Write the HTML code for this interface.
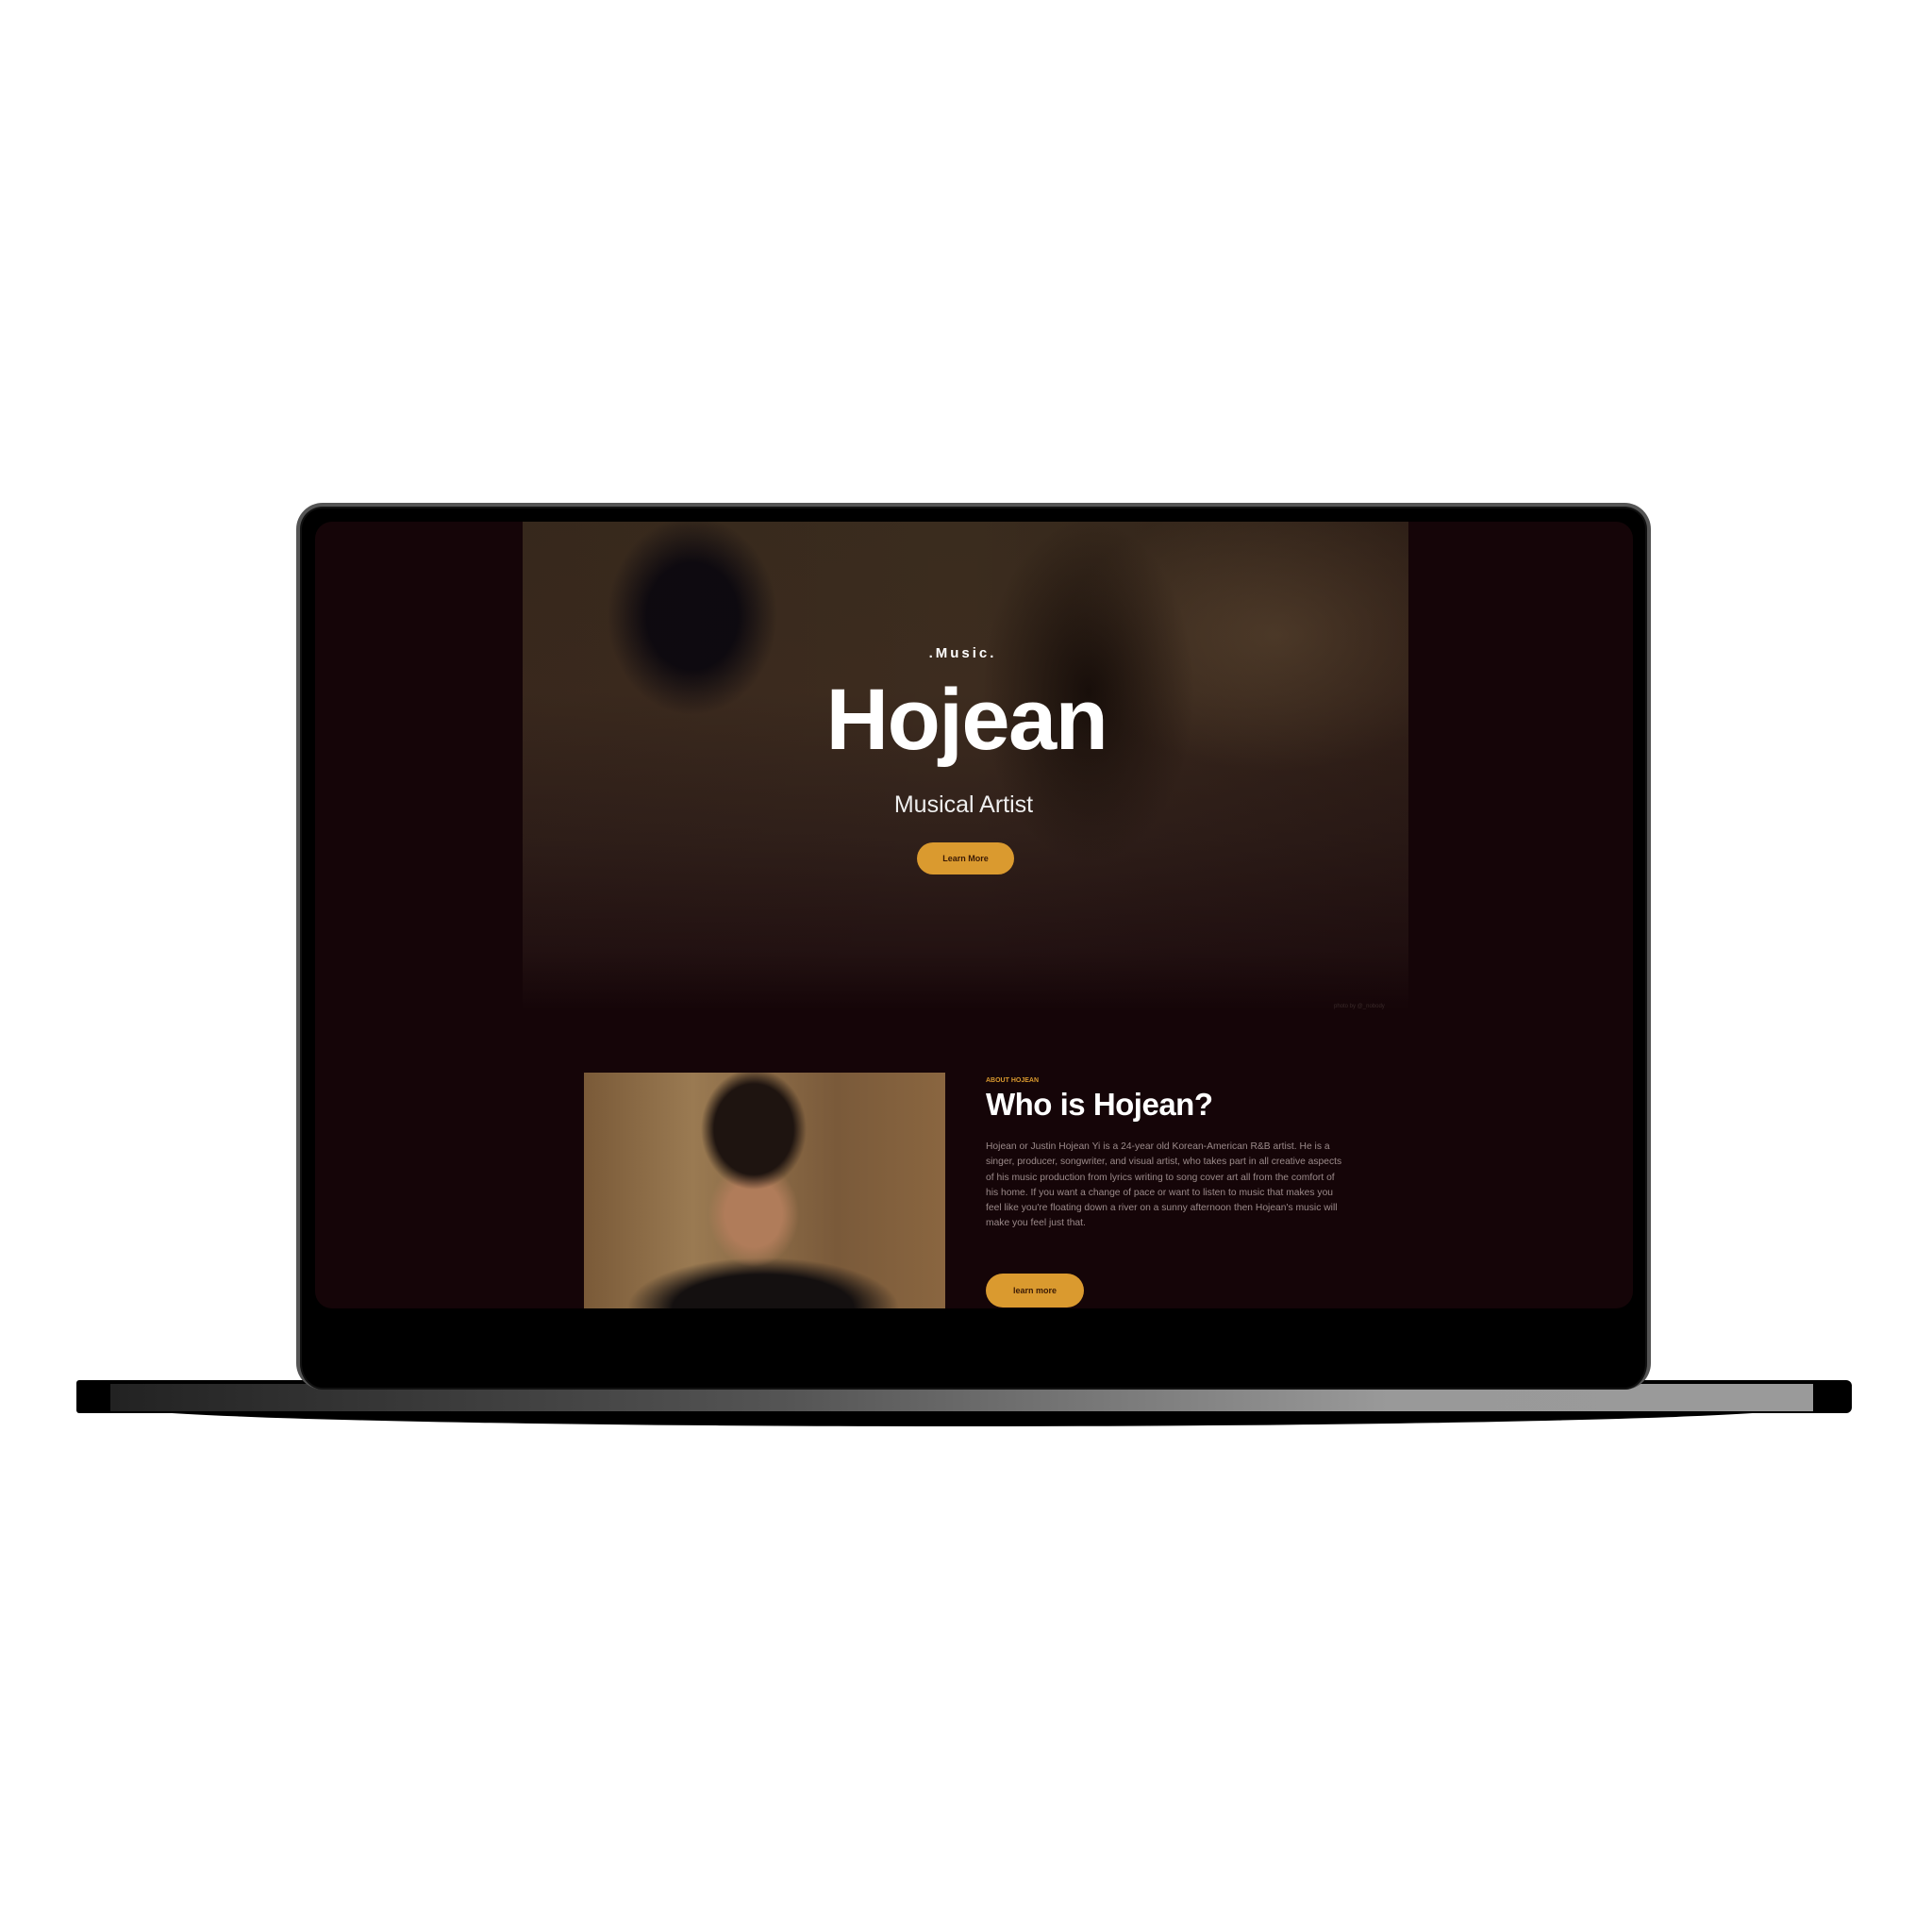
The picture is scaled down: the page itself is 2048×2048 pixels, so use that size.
<!DOCTYPE html>
<html><head><meta charset="utf-8"><style>
*{margin:0;padding:0;box-sizing:border-box}
body{width:2048px;height:2048px;background:#fff;position:relative;overflow:hidden;font-family:"Liberation Sans",sans-serif}
.lid{position:absolute;left:314px;top:533px;width:1436px;height:940px;border-radius:28px;background:#000;border:4px solid #555;border-bottom:none;box-shadow:inset 0 0 0 2px #111}
.screen{position:absolute;left:334px;top:553px;width:1397px;height:834px;background:#150508;border-radius:18px;overflow:hidden}
.hero{position:absolute;left:220px;top:0;width:939px;height:518px;
background:
radial-gradient(ellipse 160px 260px at 600px 180px,rgba(20,12,8,.9),rgba(0,0,0,0) 70%),
radial-gradient(ellipse 120px 140px at 180px 100px,#0d0a10 40%,rgba(0,0,0,0) 75%),
radial-gradient(ellipse 280px 180px at 800px 120px,#5a4630,rgba(0,0,0,0) 80%),
linear-gradient(180deg,#3a2c1e 0%,#3d2c1f 35%,#30201a 65%,#231212 88%,#150508 100%);}
.h2{position:absolute;left:220px;top:0;width:939px;height:518px;background:linear-gradient(90deg,rgba(21,5,8,.1),rgba(0,0,0,0) 50%,rgba(21,5,8,.3));}
.c{position:absolute;left:0;width:1397px;text-align:center;color:#fff}
.btn{position:absolute;background:#da9a2f;border-radius:20px;color:#3a1a05;font-size:9px;font-weight:bold;text-align:center}
.photo{position:absolute;left:285px;top:584px;width:383px;height:260px;background:
radial-gradient(ellipse 70px 80px at 180px 60px,#1e1410 60%,rgba(0,0,0,0) 80%),
radial-gradient(ellipse 60px 70px at 180px 150px,#b07c5a 50%,rgba(0,0,0,0) 80%),
radial-gradient(ellipse 160px 60px at 190px 250px,#141010 60%,rgba(0,0,0,0) 90%),
linear-gradient(90deg,#7a5a38,#9a7a52 30%,#7a5a3a 70%,#8a6640);}
p.t{position:absolute;left:711px;top:655px;width:385px;color:#9b8a8a;font-size:10.3px;line-height:16.3px}
.base{position:absolute;left:81px;top:1463px;width:1882px;height:35px;background:#000;border-radius:3px 6px 6px 3px}
.bl{position:absolute;left:117px;top:1467px;width:1805px;height:29px;background:linear-gradient(90deg,#222,#555 40%,#999 75%,#9a9a9a)}
.sh{position:absolute;left:120px;top:1490px;width:1800px;height:22px;background:#000;border-radius:0 0 50% 50%/0 0 100% 100%}
.notch{position:absolute;left:880px;top:1462px;width:290px;height:8px;background:#111;border-radius:0 0 10px 10px}
</style></head><body>
<div class="sh"></div>
<div class="base"></div><div class="bl"></div><div class="notch"></div>
<div class="lid"></div>
<div class="screen">
<div class="hero"></div><div class="h2"></div>
<div class="c" style="top:131px;left:-12px;font-size:15px;font-weight:bold;letter-spacing:3px">.Music.</div>
<div class="c" style="top:158px;left:-8px;font-size:92px;font-weight:bold;letter-spacing:-1.5px">Hojean</div>
<div class="c" style="top:286px;left:-11px;font-size:25px;color:#eee">Musical Artist</div>
<div class="btn" style="left:638px;top:340px;width:103px;height:34px;line-height:34px">Learn More</div>
<div style="position:absolute;left:1080px;top:511px;font-size:6px;color:#3a2a2a">photo by @_nobody</div>
<div class="photo"></div>
<div style="position:absolute;left:711px;top:589px;font-size:7px;font-weight:bold;color:#da9a2f">ABOUT HOJEAN</div>
<div style="position:absolute;left:711px;top:599px;font-size:33px;font-weight:bold;color:#fff;letter-spacing:-.5px">Who is Hojean?</div>
<p class="t">Hojean or Justin Hojean Yi is a 24-year old Korean-American R&amp;B artist. He is a singer, producer, songwriter, and visual artist, who takes part in all creative aspects of his music production from lyrics writing to song cover art all from the comfort of his home. If you want a change of pace or want to listen to music that makes you feel like you're floating down a river on a sunny afternoon then Hojean's music will make you feel just that.</p>
<div class="btn" style="left:711px;top:797px;width:104px;height:36px;line-height:36px">learn more</div>
</div>
</body></html>
